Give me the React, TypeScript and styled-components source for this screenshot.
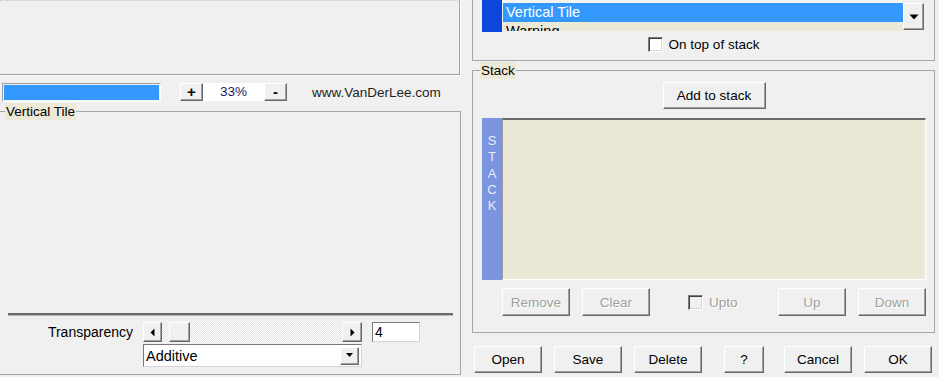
import React from "react";
import styled, { createGlobalStyle } from "styled-components";

const GlobalStyle = createGlobalStyle`
  html, body { margin: 0; padding: 0; background: #f0f0f0; }
  body { font-family: "Liberation Sans", Arial, sans-serif; font-size: 13.5px; color: #000; }
  * { box-sizing: border-box; }
`;

const FONT = `"Liberation Sans", Arial, sans-serif`;
const FS = "13.5px";

const Page = styled.div`
  width: 939px;
  height: 377px;
  overflow: hidden;
  display: flex;
  background: #f0f0f0;
`;

const LeftCol = styled.div`
  width: 462px;
  display: flex;
  flex-direction: column;
`;

const RightCol = styled.div`
  width: 469px;
  margin-left: 8px;
  display: flex;
  flex-direction: column;
`;

const TopPanel = styled.div`
  width: 460px;
  height: 75px;
  border-top: 1px dotted #c4c4c4;
  border-right: 1px solid #a0a0a0;
  border-bottom: 1px solid #a0a0a0;
  box-shadow: 1px 1px 0 #fff;
`;

const ZoomRow = styled.div`
  display: flex;
  align-items: center;
  height: 20px;
  margin-top: 7px;
`;

const Progress = styled.div`
  width: 159px;
  height: 19px;
  margin-left: 2px;
  padding: 1px;
  border: 1px solid;
  border-color: #a0a0a0 #fff #fff #a0a0a0;
`;

const ProgressFill = styled.div`
  height: 100%;
  background: #3399ff;
`;

const SmallButton = styled.button<{ $ml?: number }>`
  width: 23px;
  height: 18px;
  margin-left: ${(p) => p.$ml ?? 0}px;
  padding: 0;
  background: #f0f0f0;
  border: 1px solid;
  border-color: #fff #696969 #696969 #fff;
  box-shadow: inset -1px -1px #a0a0a0;
  font: bold 15px ${FONT};
  line-height: 14px;
  color: #000;
`;

const PercentField = styled.div`
  width: 61px;
  height: 18px;
  background: #fff;
  color: #1a1a60;
  text-align: center;
  font: ${FS} ${FONT};
  line-height: 17px;
`;

const SiteLink = styled.span`
  margin-left: 25px;
  font: ${FS} ${FONT};
  color: #1e1e1e;
`;

const Group = styled.div<{ $noLeft?: boolean; $noTop?: boolean; $w: number; $h: number; $mt: number; $ml?: number }>`
  position: relative;
  width: ${(p) => p.$w}px;
  height: ${(p) => p.$h}px;
  margin-top: ${(p) => p.$mt}px;
  margin-left: ${(p) => p.$ml ?? 0}px;
  border: 1px solid #a6a6a6;
  ${(p) => (p.$noLeft ? "border-left: none;" : "")}
  ${(p) => (p.$noTop ? "border-top: none;" : "")}
  display: flex;
  flex-direction: column;
`;

const Legend = styled.span<{ $left: number }>`
  position: absolute;
  top: -9px;
  left: ${(p) => p.$left}px;
  padding: 0 1px;
  background: #ece9d8;
  font: ${FS} ${FONT};
  line-height: 17px;
  color: #000;
`;

const GroupFill = styled.div`
  flex: 1;
`;

const Separator = styled.div`
  margin: 0 7px 0 8px;
  height: 3px;
  border-top: 2px solid #6a6a6a;
  border-bottom: 1px solid #b4b4b4;
`;

const FieldRow = styled.div`
  display: flex;
  align-items: center;
  height: 20px;
  margin-top: 6px;
`;

const FieldLabel = styled.span`
  width: 133px;
  text-align: right;
  font: 14px ${FONT};
`;

const ScrollBar = styled.div`
  display: flex;
  width: 219px;
  height: 20px;
  margin-left: 10px;
`;

const RaisedBox = styled.div<{ $w: number }>`
  width: ${(p) => p.$w}px;
  height: 20px;
  display: flex;
  align-items: center;
  justify-content: center;
  background: #f0f0f0;
  border: 1px solid;
  border-color: #fff #696969 #696969 #fff;
  box-shadow: inset -1px -1px #a0a0a0;
  flex-shrink: 0;
`;

const ScrollTrack = styled.div`
  flex: 1;
  display: flex;
  background-color: #fafafa;
  background-image: repeating-conic-gradient(#e6e6e6 0 25%, #fafafa 0 50%);
  background-size: 2px 2px;
`;

const ThumbSlot = styled.div<{ $offset: number }>`
  margin-left: ${(p) => p.$offset}px;
`;

const NumberField = styled.div`
  width: 48px;
  height: 20px;
  margin-left: 10px;
  background: #fff;
  border: 1px solid;
  border-color: #7a7a7a #d4d4d4 #d4d4d4 #7a7a7a;
  padding-left: 2px;
  font: 14px ${FONT};
  line-height: 18px;
`;

const Combo = styled.div`
  display: flex;
  align-items: center;
  width: 219px;
  height: 23px;
  margin: 2px 0 7px 143px;
  background: #fff;
  border: 1px solid;
  border-color: #7a7a7a #d4d4d4 #d4d4d4 #7a7a7a;
  padding: 0 2px 0 2px;
`;

const ComboText = styled.span`
  flex: 1;
  font: 14.5px ${FONT};
`;

const DropButton = styled.div<{ $h: number; $w?: number; $mt?: number }>`
  width: ${(p) => p.$w ?? 19}px;
  height: ${(p) => p.$h}px;
  margin-top: ${(p) => p.$mt ?? 0}px;
  display: flex;
  align-items: center;
  justify-content: center;
  background: #f0f0f0;
  border: 1px solid;
  border-color: #fff #696969 #696969 #fff;
  box-shadow: inset -1px -1px #a0a0a0;
  flex-shrink: 0;
`;

const ListRow = styled.div`
  display: flex;
  padding-left: 9px;
  height: 32px;
`;

const Swatch = styled.div`
  width: 20px;
  height: 32px;
  background: #0a47da;
`;

const StyleList = styled.div`
  width: 400px;
  height: 31px;
  margin-left: 1px;
  padding-top: 3px;
  overflow: hidden;
  background: #f4f4f2;
`;

const ListItem = styled.div<{ $selected?: boolean }>`
  height: 19px;
  padding-left: 3px;
  font: 14.5px ${FONT};
  line-height: 19px;
  color: ${(p) => (p.$selected ? "#fff" : "#000")};
  background: ${(p) => (p.$selected ? "#3399ff" : "#ece9d8")};
`;

const CheckRow = styled.label<{ $mt: number; $center?: boolean; $ml?: number; $w?: number; $disabled?: boolean }>`
  display: flex;
  align-items: center;
  justify-content: ${(p) => (p.$center ? "center" : "flex-start")};
  margin-top: ${(p) => p.$mt}px;
  margin-left: ${(p) => p.$ml ?? 0}px;
  width: ${(p) => (p.$w ? `${p.$w}px` : "auto")};
  font: ${FS} ${FONT};
  color: ${(p) => (p.$disabled ? "#a0a0a0" : "#000")};
  text-shadow: ${(p) => (p.$disabled ? "1px 1px 0 #fff" : "none")};
`;

const CheckBox = styled.span<{ $disabled?: boolean }>`
  width: 15px;
  height: 15px;
  margin-right: 6px;
  background: ${(p) => (p.$disabled ? "#f0f0f0" : "#fff")};
  border: 1px solid;
  border-color: #7a7a7a #fff #fff #7a7a7a;
  box-shadow: inset 1px 1px #404040, inset -1px -1px #d8d8d8;
`;

const AddRow = styled.div`
  display: flex;
  justify-content: center;
  padding-left: 20px;
  margin-top: 11px;
`;

const Button = styled.button<{ $w: number; $h?: number; $ml?: number; $disabled?: boolean }>`
  width: ${(p) => p.$w}px;
  height: ${(p) => p.$h ?? 27}px;
  margin-left: ${(p) => p.$ml ?? 0}px;
  padding: 0;
  flex-shrink: 0;
  background: #f0f0f0;
  border: 1px solid;
  border-color: #fff #696969 #696969 #fff;
  box-shadow: inset -1px -1px #a0a0a0;
  font: ${FS} ${FONT};
  color: ${(p) => (p.$disabled ? "#a0a0a0" : "#000")};
  text-shadow: ${(p) => (p.$disabled ? "1px 1px 0 #fff" : "none")};
`;

const GroupBody = styled.div`
  padding: 0 8px 0 9px;
  display: flex;
  flex-direction: column;
`;

const StackArea = styled.div`
  display: flex;
  height: 162px;
  margin-top: 9px;
`;

const StackBar = styled.div`
  width: 20px;
  background: #7a94e0;
  display: flex;
  flex-direction: column;
  align-items: center;
  padding-top: 15px;
`;

const StackLetter = styled.span`
  font: 13px ${FONT};
  line-height: 16.3px;
  color: #e8ecfa;
`;

const StackList = styled.div`
  flex: 1;
  background: #ebe8d8;
  border: 1px solid;
  border-color: #6a6a6a #fff #fff #9a9a9a;
  border-top-width: 2px;
`;

const ButtonRow = styled.div<{ $mt: number; $pl?: number }>`
  display: flex;
  align-items: center;
  margin-top: ${(p) => p.$mt}px;
  padding-left: ${(p) => p.$pl ?? 0}px;
`;

const Arrow: React.FC<{ dir: "left" | "right" | "down"; big?: boolean }> = ({ dir, big }) => {
  if (dir === "down")
    return big ? (
      <svg width="10" height="6" viewBox="0 0 10 6">
        <path d="M0.5 0.5 H9.5 L5 5.5 Z" fill="#000" />
      </svg>
    ) : (
      <svg width="8" height="5" viewBox="0 0 8 5">
        <path d="M0 0 H7 L3.5 4 Z" fill="#000" />
      </svg>
    );
  return (
    <svg width="5" height="9" viewBox="0 0 5 9">
      {dir === "left" ? <path d="M4.5 0.5 V8.5 L0.5 4.5 Z" fill="#000" /> : <path d="M0.5 0.5 V8.5 L4.5 4.5 Z" fill="#000" />}
    </svg>
  );
};

export default function App() {
  return (
    <>
      <GlobalStyle />
      <Page>
        <LeftCol>
          <TopPanel />
          <ZoomRow>
            <Progress>
              <ProgressFill />
            </Progress>
            <SmallButton $ml={19}>+</SmallButton>
            <PercentField>33%</PercentField>
            <SmallButton>-</SmallButton>
            <SiteLink>www.VanDerLee.com</SiteLink>
          </ZoomRow>
          <Group $noLeft $w={461} $h={264} $mt={9}>
            <Legend $left={5}>Vertical Tile</Legend>
            <GroupFill />
            <Separator />
            <FieldRow>
              <FieldLabel>Transparency</FieldLabel>
              <ScrollBar>
                <RaisedBox $w={19}>
                  <Arrow dir="left" />
                </RaisedBox>
                <ScrollTrack>
                  <ThumbSlot $offset={7}>
                    <RaisedBox $w={21} />
                  </ThumbSlot>
                </ScrollTrack>
                <RaisedBox $w={20}>
                  <Arrow dir="right" />
                </RaisedBox>
              </ScrollBar>
              <NumberField>4</NumberField>
            </FieldRow>
            <Combo>
              <ComboText>Additive</ComboText>
              <DropButton $h={18}>
                <Arrow dir="down" />
              </DropButton>
            </Combo>
          </Group>
        </LeftCol>
        <RightCol>
          <Group $noTop $w={463} $h={61} $mt={0} $ml={2}>
            <ListRow>
              <Swatch />
              <StyleList>
                <ListItem $selected>Vertical Tile</ListItem>
                <ListItem>Warning</ListItem>
              </StyleList>
              <DropButton $h={27} $w={21} $mt={3}>
                <Arrow dir="down" big />
              </DropButton>
            </ListRow>
            <CheckRow $mt={5} $center>
              <CheckBox />
              On top of stack
            </CheckRow>
          </Group>
          <Group $w={463} $h={263} $mt={9} $ml={2}>
            <Legend $left={7}>Stack</Legend>
            <GroupBody>
              <AddRow>
                <Button $w={103} $h={27}>Add to stack</Button>
              </AddRow>
              <StackArea>
                <StackBar>
                  {"STACK".split("").map((c) => (
                    <StackLetter key={c}>{c}</StackLetter>
                  ))}
                </StackBar>
                <StackList />
              </StackArea>
              <ButtonRow $mt={8} $pl={20}>
                <Button $w={68} $h={28} $disabled>Remove</Button>
                <Button $w={68} $h={28} $ml={12} $disabled>Clear</Button>
                <CheckRow $mt={0} $ml={38} $w={90} $disabled>
                  <CheckBox $disabled />
                  Upto
                </CheckRow>
                <Button $w={68} $h={28} $disabled>Up</Button>
                <Button $w={68} $h={28} $ml={12} $disabled>Down</Button>
              </ButtonRow>
            </GroupBody>
          </Group>
          <ButtonRow $mt={13} $pl={4}>
            <Button $w={68}>Open</Button>
            <Button $w={68} $ml={12}>Save</Button>
            <Button $w={68} $ml={12}>Delete</Button>
            <Button $w={40} $ml={22}>?</Button>
            <Button $w={68} $ml={20}>Cancel</Button>
            <Button $w={68} $ml={12}>OK</Button>
          </ButtonRow>
        </RightCol>
      </Page>
    </>
  );
}
